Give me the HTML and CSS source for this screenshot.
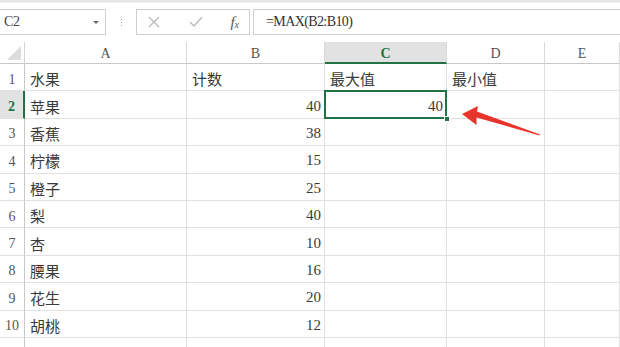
FILE: index.html
```html
<!DOCTYPE html>
<html lang="zh">
<head>
<meta charset="utf-8">
<link rel="stylesheet" href="styles.css">
</head>
<body>
<div class="app">
  <div class="ribbon-edge"></div>
  <div class="formula-row">
    <div class="namebox"><span class="name">C2</span><span class="drop"></span></div>
    <div class="grip"><i></i><i></i><i></i></div>
    <div class="fbuttons">
      <svg class="ficon" width="14" height="14" viewBox="0 0 14 14"><path d="M2 2 L12 12 M12 2 L2 12" stroke="#b9b9b9" stroke-width="1.3" fill="none"/></svg>
      <svg class="ficon" width="16" height="14" viewBox="0 0 16 14"><path d="M2 7 L6 11 L14 2" stroke="#b9b9b9" stroke-width="1.3" fill="none"/></svg>
      <span class="fx">f<sub>x</sub></span>
    </div>
    <div class="finput">=MAX(B2:B10)</div>
  </div>
  <div class="sheet">
    <div class="corner"><span class="tri"></span></div>
    <div class="ch">A</div>
    <div class="ch">B</div>
    <div class="ch sel">C</div>
    <div class="ch">D</div>
    <div class="ch">E</div>

    <div class="rh">1</div><div class="c">水果</div><div class="c">计数</div><div class="c">最大值</div><div class="c">最小值</div><div class="c"></div>
    <div class="rh sel">2</div><div class="c">苹果</div><div class="c n">40</div><div class="c n active">40<span class="handle"></span></div><div class="c"></div><div class="c"></div>
    <div class="rh">3</div><div class="c">香蕉</div><div class="c n">38</div><div class="c"></div><div class="c"></div><div class="c"></div>
    <div class="rh">4</div><div class="c">柠檬</div><div class="c n">15</div><div class="c"></div><div class="c"></div><div class="c"></div>
    <div class="rh">5</div><div class="c">橙子</div><div class="c n">25</div><div class="c"></div><div class="c"></div><div class="c"></div>
    <div class="rh">6</div><div class="c">梨</div><div class="c n">40</div><div class="c"></div><div class="c"></div><div class="c"></div>
    <div class="rh">7</div><div class="c">杏</div><div class="c n">10</div><div class="c"></div><div class="c"></div><div class="c"></div>
    <div class="rh">8</div><div class="c">腰果</div><div class="c n">16</div><div class="c"></div><div class="c"></div><div class="c"></div>
    <div class="rh">9</div><div class="c">花生</div><div class="c n">20</div><div class="c"></div><div class="c"></div><div class="c"></div>
    <div class="rh">10</div><div class="c">胡桃</div><div class="c n">12</div><div class="c"></div><div class="c"></div><div class="c"></div>
    <div class="rh"></div><div class="c"></div><div class="c"></div><div class="c"></div><div class="c"></div><div class="c"></div>

    <svg class="arrow" width="100" height="40" viewBox="0 0 100 40">
      <path d="M1 17 L17 9 L16 14.5 L79 37.5 L78.5 38.5 L15.5 20.5 L15.5 28 Z" fill="#e8352b"/>
    </svg>
  </div>
</div>
</body>
</html>
```
FILE: styles.css
```css
* { box-sizing: border-box; }
html, body { margin: 0; padding: 0; background: #fff; }
body { width: 620px; height: 347px; overflow: hidden; font-family: "Liberation Serif", "Noto Sans CJK SC", serif; color: #333; }
.app { height: 347px; overflow: hidden; }

.ribbon-edge { height: 3px; background: #e6e6e6; border-bottom: 1px solid #f2f2f2; }

.formula-row { display: flex; align-items: stretch; height: 26px; margin-top: 6px; }
.namebox { width: 106px; border: 1px solid #cfcfcf; border-left: none; display: flex; align-items: center; justify-content: space-between; padding: 0 6px 0 4px; background: #fff; }
.name { font-size: 14px; color: #444; letter-spacing: -0.3px; }
.drop { width: 0; height: 0; border-left: 3px solid transparent; border-right: 3px solid transparent; border-top: 3px solid #666; }
.grip { width: 30px; display: flex; flex-direction: column; align-items: center; justify-content: center; gap: 2px; }
.grip i { width: 1px; height: 1px; background: #9a9a9a; display: block; }
.fbuttons { width: 114px; border: 1px solid #cfcfcf; display: flex; align-items: center; padding: 0 10px 0 10px; justify-content: space-between; }
.ficon { display: block; }
.fx { font-family: "Liberation Serif", serif; font-style: italic; font-size: 15px; color: #555; line-height: 1; }
.fx sub { font-size: 10px; vertical-align: -1px; }
.finput { flex: 1; margin-left: 3px; border: 1px solid #cfcfcf; border-right: none; display: flex; align-items: center; padding-left: 12px; font-size: 14px; color: #333; letter-spacing: -0.6px; }

.sheet { position: relative; margin-top: 7px; display: grid; grid-template-columns: 25px 162px 138px 122px 98px 75px; grid-template-rows: 22px repeat(11, 27.4px); }

.corner { border-right: 1px solid #d4d4d4; border-bottom: 1px solid #c8c8c8; position: relative; }
.tri { position: absolute; right: 3px; bottom: 3px; width: 0; height: 0; border-left: 14px solid transparent; border-bottom: 14px solid #dcdcdc; }
.ch { border-right: 1px solid #dadada; border-bottom: 1px solid #c8c8c8; display: flex; align-items: center; justify-content: center; font-size: 14px; color: #555; padding-top: 3px; }
.ch.sel { background: #e2e2e2; color: #217346; font-weight: bold; border-bottom: 2px solid #217346; }
.rh { border-right: 1px solid #c8c8c8; border-bottom: 1px solid #e0e0e0; display: flex; align-items: center; justify-content: center; font-size: 14px; color: #555; padding-top: 5px; }
.rh.sel { background: #e2e2e2; color: #217346; border-right: 2px solid #217346; font-weight: bold; }
.c { border-right: 1px solid #e0e0e0; border-bottom: 1px solid #e0e0e0; display: flex; align-items: center; padding: 3px 4px 0 5px; font-family: "Noto Sans CJK SC", "Liberation Serif", sans-serif; font-size: 15px; color: #3a3a3a; white-space: nowrap; }
.c.n { justify-content: flex-end; font-family: "Liberation Serif", serif; font-size: 15px; padding-right: 3px; }
.active { position: relative; }
.active::after { content: ""; position: absolute; left: -1px; top: -1px; right: -1px; bottom: -1px; border: 2px solid #217346; pointer-events: none; }
.handle { position: absolute; right: -4px; bottom: -4px; width: 6px; height: 6px; background: #217346; border: 1px solid #fff; z-index: 2; }

.arrow { position: absolute; left: 461px; top: 55px; }
```
